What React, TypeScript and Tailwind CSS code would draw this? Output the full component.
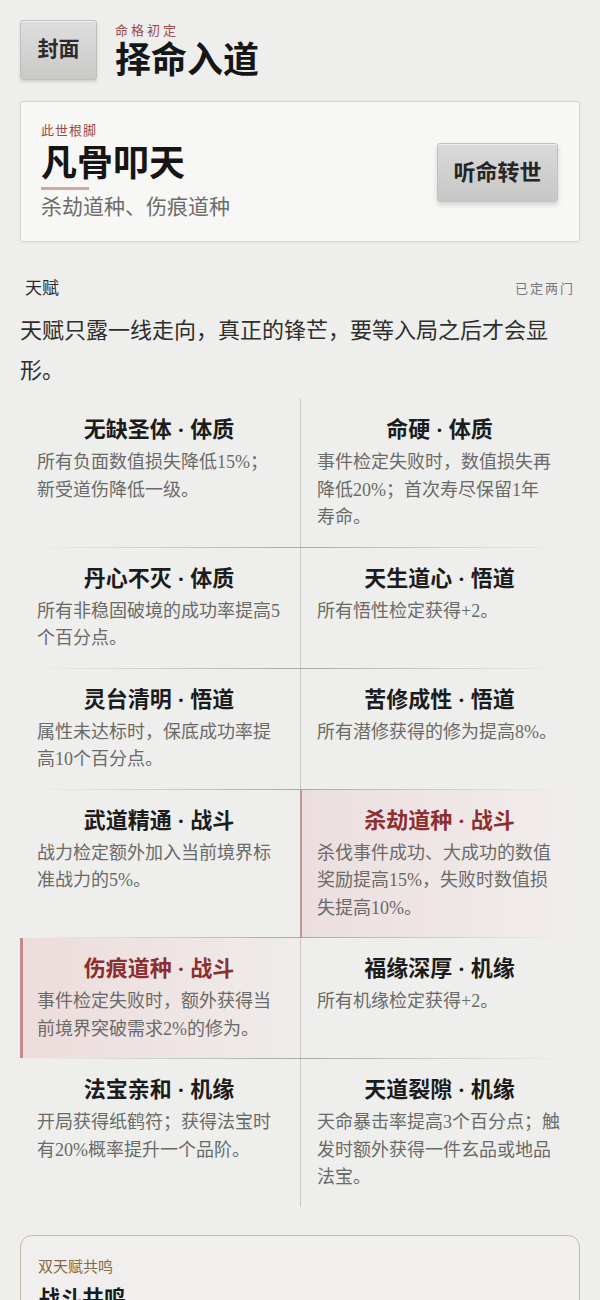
import React from "react";

type Talent = {
  name: string;
  kind: string;
  desc: React.ReactNode;
  picked?: boolean;
};

const rows: Talent[][] = [
  [
    { name: "无缺圣体", kind: "体质", desc: "所有负面数值损失降低15%；新受道伤降低一级。" },
    {
      name: "命硬",
      kind: "体质",
      desc: (
        <>
          事件检定失败时，数值损失再降低20%；首次寿尽保留1年
          <span className="whitespace-nowrap">寿命。</span>
        </>
      ),
    },
  ],
  [
    { name: "丹心不灭", kind: "体质", desc: "所有非稳固破境的成功率提高5个百分点。" },
    { name: "天生道心", kind: "悟道", desc: "所有悟性检定获得+2。" },
  ],
  [
    { name: "灵台清明", kind: "悟道", desc: "属性未达标时，保底成功率提高10个百分点。" },
    { name: "苦修成性", kind: "悟道", desc: "所有潜修获得的修为提高8%。" },
  ],
  [
    { name: "武道精通", kind: "战斗", desc: "战力检定额外加入当前境界标准战力的5%。" },
    { name: "杀劫道种", kind: "战斗", desc: "杀伐事件成功、大成功的数值奖励提高15%，失败时数值损失提高10%。", picked: true },
  ],
  [
    { name: "伤痕道种", kind: "战斗", desc: "事件检定失败时，额外获得当前境界突破需求2%的修为。", picked: true },
    { name: "福缘深厚", kind: "机缘", desc: "所有机缘检定获得+2。" },
  ],
  [
    { name: "法宝亲和", kind: "机缘", desc: "开局获得纸鹤符；获得法宝时有20%概率提升一个品阶。" },
    { name: "天道裂隙", kind: "机缘", desc: "天命暴击率提高3个百分点；触发时额外获得一件玄品或地品法宝。" },
  ],
];

function cellClass(picked: boolean | undefined, right: boolean) {
  if (right && picked)
    return "pl-[15px] pr-[18px] border-l-2 border-[#c49393] bg-gradient-to-r from-[#ecdede] to-[#f1eeed]";
  if (right) return "pl-[16px] pr-[18px] border-l border-[#c9c9c7]";
  if (picked)
    return "pl-[14px] pr-[19px] border-l-[3px] border-[#c48a8a] bg-gradient-to-r from-[#eddcdc] to-[#efeceb]";
  return "pl-[17px] pr-[19px]";
}

function TalentCell({ t, right }: { t: Talent; right: boolean }) {
  return (
    <div className={"pt-[16px] pb-[15px] " + cellClass(t.picked, right)}>
      <h4
        className={
          "text-center text-[22px] leading-[30px] font-bold " +
          (t.picked ? "text-[#8e2f2f]" : "text-[#1c1c1c]")
        }
      >
        {t.name} · {t.kind}
      </h4>
      <p className="mt-[4px] text-[18px] leading-[27.5px] text-[#6a6a68]">{t.desc}</p>
    </div>
  );
}

export default function App() {
  return (
    <div
      className="min-h-[1300px] bg-[#eeeeec] px-5 pt-5 text-[#222]"
      style={{ fontFamily: '"Liberation Serif", "Noto Sans CJK SC", serif' }}
    >
      <header className="flex items-center gap-[18px]">
        <button className="flex h-[60px] w-[77px] items-center justify-center rounded-[3px] border border-[#bfbfbd] bg-gradient-to-b from-[#dedede] to-[#c9c9c8] text-[21px] font-bold text-[#2b2b2b] shadow-[inset_0_1px_0_rgba(255,255,255,0.6),0_2px_3px_rgba(0,0,0,0.12)]">
          封面
        </button>
        <div className="pt-[3px]">
          <p className="text-[13px] leading-[16px] tracking-[3px] text-[#9a4a48]">命格初定</p>
          <h1 className="mt-[3px] text-[36px] leading-[38px] font-bold text-[#161616]">择命入道</h1>
        </div>
      </header>

      <section className="mt-[21px] flex items-center justify-between rounded-[3px] border border-[#d6d6d4] bg-[#f7f7f5] px-5 pt-[20px] pb-[20px] shadow-[0_1px_3px_rgba(0,0,0,0.06)]">
        <div>
          <p className="text-[13px] leading-[18px] tracking-[1px] text-[#9a4a48]">此世根脚</p>
          <h2 className="mt-[2px] text-[36px] leading-[44px] font-bold text-[#151515]">凡骨叩天</h2>
          <div className="mt-[1px] h-[3px] w-12 bg-[#d6a4a4]" />
          <p className="mt-[3px] text-[21px] leading-[28px] text-[#6c6c6a]">杀劫道种、伤痕道种</p>
        </div>
        <button className="mr-[1px] mt-[2px] flex h-[59px] w-[121px] items-center justify-center rounded-[3px] border border-[#c2c2c0] bg-gradient-to-b from-[#dadada] to-[#c6c6c5] text-[22px] font-bold text-[#262626] shadow-[inset_0_1px_0_rgba(255,255,255,0.6),0_3px_5px_rgba(0,0,0,0.15)]">
          听命转世
        </button>
      </section>

      <div className="mt-[35px] flex items-center justify-between px-[5px]">
        <h3 className="text-[17px] leading-[24px] text-[#2a2a2a]">天赋</h3>
        <span className="text-[13px] leading-[20px] tracking-[2px] text-[#777]">已定两门</span>
      </div>

      <p className="mt-[10px] pr-[18px] text-[22px] leading-[40px] text-[#2e2e2e]">
        天赋只露一线走向，真正的锋芒，要等入局之后才会显形。
      </p>

      <div className="mt-[8px]">
        {rows.map((row, i) => (
          <div key={i}>
            <div className="grid grid-cols-2">
              <TalentCell t={row[0]} right={false} />
              <TalentCell t={row[1]} right={true} />
            </div>
            {i < rows.length - 1 && (
              <div className="mx-[14px] h-px bg-gradient-to-r from-transparent via-[#a9a9a7] to-transparent" />
            )}
          </div>
        ))}
      </div>

      <section className="mt-[28px] rounded-xl border border-[#cbb8a4] bg-[#f0efed] px-[17px] pt-[20px] pb-6">
        <p className="text-[15px] leading-[22px] text-[#876843]">双天赋共鸣</p>
        <h3 className="mt-[6px] text-[22px] leading-[30px] font-bold text-[#1a1a1a]">战斗共鸣</h3>
      </section>
    </div>
  );
}
